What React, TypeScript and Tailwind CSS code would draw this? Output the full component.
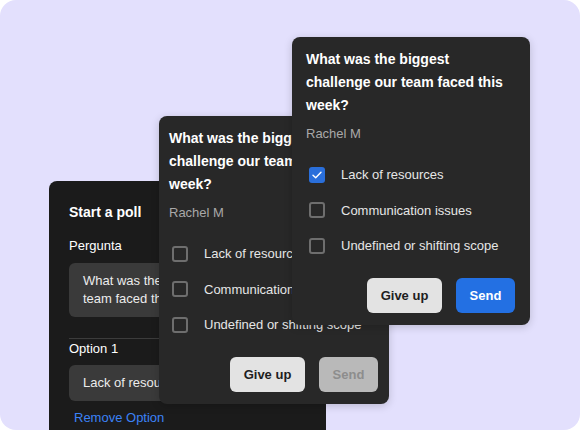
import React from 'react';

const font = { fontFamily: '"Liberation Sans", Arial, sans-serif' };

const options = ['Lack of resources', 'Communication issues', 'Undefined or shifting scope'];

interface PollCardProps {
  checked?: number;
  canSend: boolean;
  className: string;
  padClass: string;
}

const Check: React.FC<{ on: boolean }> = ({ on }) =>
  on ? (
    <span className="flex h-4 w-4 shrink-0 items-center justify-center rounded-[3px] bg-[#2a6fdb]">
      <svg width="10" height="8" viewBox="0 0 10 8" fill="none">
        <path d="M1 4.2 3.7 6.8 9 1.2" stroke="#fff" strokeWidth="1.4" strokeLinecap="round" strokeLinejoin="round" />
      </svg>
    </span>
  ) : (
    <span className="h-4 w-4 shrink-0 rounded-[3px] border-2 border-[#6e6e6e]" />
  );

const PollCard: React.FC<PollCardProps> = ({ checked, canSend, className, padClass }) => (
  <div className={`absolute flex flex-col rounded-lg bg-[#282828] pt-[11px] pb-3 shadow-[0_2px_8px_rgba(0,0,0,0.18)] ${padClass} ${className}`}>
    <h2 className="text-[14px] font-bold leading-[23px] text-white">
      What was the biggest challenge our team faced this week?
    </h2>
    <p className="mt-[9px] text-[13px] leading-4 text-[#a9a9a9]">Rachel M</p>
    <div className="mt-[15px] flex flex-col">
      {options.map((o, i) => (
        <div key={o} className="flex h-[35.5px] items-center gap-4 whitespace-nowrap pl-[3px] text-[13px] text-[#e6e6e6]">
          <Check on={checked === i} />
          <span>{o}</span>
        </div>
      ))}
    </div>
    <div className="mt-auto flex justify-end gap-[14px]">
      <button className="h-[35px] w-[75px] rounded-md bg-[#e3e3e3] text-[13px] font-bold text-[#1e1e1e]">Give up</button>
      <button
        className={`h-[35px] w-[59px] rounded-md text-[13px] font-bold ${
          canSend ? 'bg-[#2370e3] text-white' : 'bg-[#b9b9b9] text-[#8d8d8d]'
        }`}
      >
        Send
      </button>
    </div>
  </div>
);

export default function App() {
  return (
    <div className="bg-white" style={font}>
      <div className="relative h-[430px] w-[580px] overflow-hidden rounded-2xl bg-[#e3e0fd]">
        {/* poll composer, behind */}
        <div className="absolute left-[49px] top-[181px] h-[280px] w-[277px] rounded-lg bg-[#1b1b1b] px-5 pt-[23px]">
          <h1 className="text-[14px] font-bold leading-4 text-white">Start a poll</h1>
          <p className="mt-[18px] text-[13px] leading-4 text-white">Pergunta</p>
          <div className="mt-[9px] h-[54px] w-[238px] rounded-md bg-[#3a3a3a] px-[14px] py-[9px] text-[13px] leading-[18px] text-[#ececec]">
            What was the biggest challenge our team faced this week?
          </div>
          <div className="mt-[21px] h-px bg-[#3c3c3c]" />
          <p className="mt-[2px] text-[13px] leading-4 text-white">Option 1</p>
          <div className="mt-[8px] flex h-[36px] w-[238px] items-center rounded-md bg-[#3a3a3a] px-[14px] text-[13px] text-[#ececec]">
            Lack of resources
          </div>
          <button className="mt-[9px] pl-[5px] text-[13px] leading-4 text-[#3b82f6]">Remove Option</button>
        </div>

        <PollCard className="left-[159px] top-[116px] h-[288px] w-[230px]" padClass="pl-[10px] pr-[11px]" canSend={false} />
        <PollCard className="left-[292px] top-[37px] h-[288px] w-[238px]" padClass="pl-[14px] pr-[15px]" checked={0} canSend />
      </div>
    </div>
  );
}
